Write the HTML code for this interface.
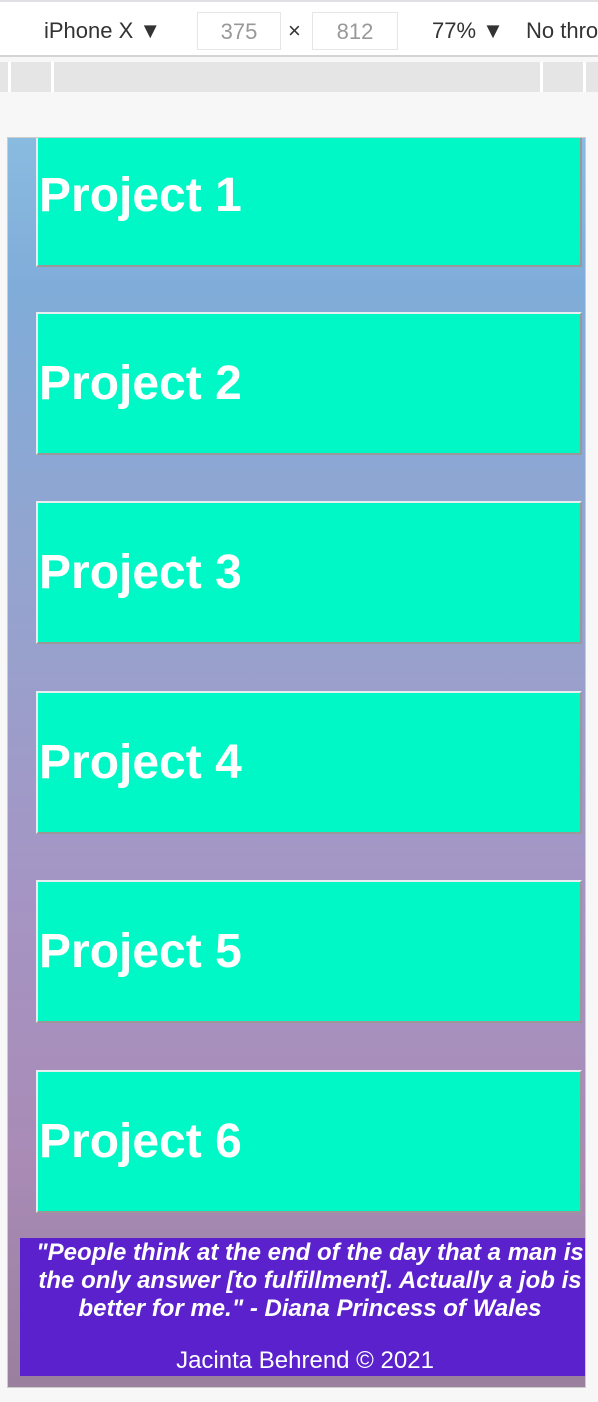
<!DOCTYPE html>
<html><head><style>
body{margin:0;width:598px;height:1402px;background:#f7f7f7;position:relative;overflow:hidden;font-family:"Liberation Sans",Arial,sans-serif}
.tb{position:absolute;left:0;top:0;width:598px;height:57px;background:#fff;border-top:2px solid #e0e0e4;border-bottom:2px solid #d4d4d4;box-sizing:border-box;font-size:22px;color:#333;white-space:nowrap}
.tb span{position:absolute;top:16px}
.box{position:absolute;top:10px;height:38px;border:1px solid #e6e6e6;color:#999;text-align:center;line-height:38px;font-size:22px;box-sizing:border-box}
.ruler{position:absolute;left:0;top:62px;width:598px;height:30px;background:#e5e5e5}
.ruler i{position:absolute;top:0;width:3px;height:30px;background:#fff}
.dev{position:absolute;left:7px;top:137px;width:579px;height:1251px;border:1px solid #ccc;box-sizing:border-box;background:linear-gradient(180deg,#89bbe0 0%,#80acd9 12%,#94a4cf 35%,#a595c4 60%,#a98bb6 82%,#9a7f9e 100%);overflow:hidden}
.card{position:absolute;left:28px;width:546px;height:143px;background:#00f8c6;border:2px solid;border-color:#e6eef0 #999 #999 #e6eef0;box-sizing:border-box;color:#fff;font-weight:bold;font-size:48px;padding-left:1px;display:flex;align-items:center}
.foot{position:absolute;left:12px;top:1100px;width:570px;height:138px;background:#5b21cc;color:#fff;text-align:center}
.q{font-style:italic;font-weight:bold;font-size:24px;line-height:28px;width:600px;margin-left:-10px;white-space:nowrap;padding-top:1px}
.c{font-size:24px;margin-top:24px}
</style></head><body>
<div class="tb"><span style="left:44px">iPhone X ▼</span><div class="box" style="left:197px;width:84px">375</div><span style="left:288px">×</span><div class="box" style="left:312px;width:86px">812</div><span style="left:432px">77% ▼</span><span style="left:526px">No thro</span></div>
<div class="ruler"><i style="left:8px"></i><i style="left:51px"></i><i style="left:540px"></i><i style="left:583px"></i></div>
<div class="dev">
<div class="card" style="top:-15px;height:144px">Project 1</div>
<div class="card" style="top:174px">Project 2</div>
<div class="card" style="top:363px">Project 3</div>
<div class="card" style="top:553px">Project 4</div>
<div class="card" style="top:742px">Project 5</div>
<div class="card" style="top:932px">Project 6</div>
<div class="foot"><div class="q">"People think at the end of the day that a man is<br>the only answer [to fulfillment]. Actually a job is<br>better for me." - Diana Princess of Wales</div><div class="c">Jacinta Behrend © 2021</div></div>
</div>
</body></html>
